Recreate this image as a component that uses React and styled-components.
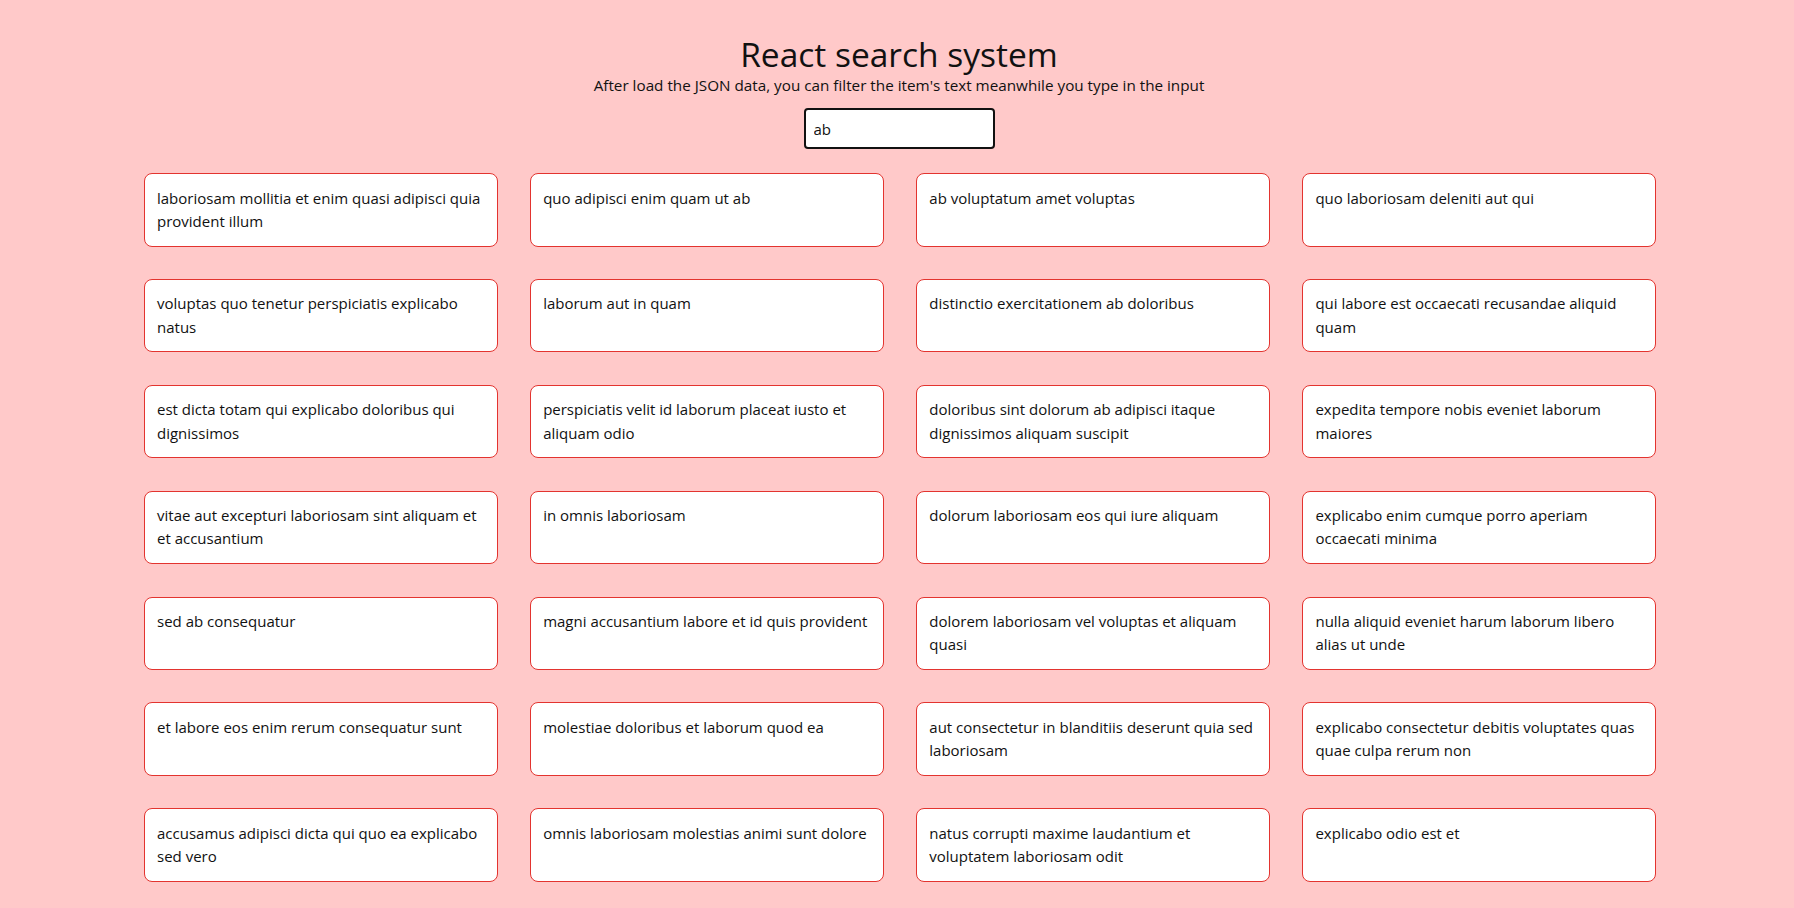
import React, { useState } from "react";
import styled, { createGlobalStyle } from "styled-components";

const GlobalStyle = createGlobalStyle`
  body {
    margin: 0;
    background: #ffc9c9;
    font-family: "Open Sans", "Noto Sans", sans-serif;
    color: #111;
  }
`;

const items = [
  "laboriosam mollitia et enim quasi adipisci quia provident illum",
  "quo adipisci enim quam ut ab",
  "ab voluptatum amet voluptas",
  "quo laboriosam deleniti aut qui",
  "voluptas quo tenetur perspiciatis explicabo natus",
  "laborum aut in quam",
  "distinctio exercitationem ab doloribus",
  "qui labore est occaecati recusandae aliquid quam",
  "est dicta totam qui explicabo doloribus qui dignissimos",
  "perspiciatis velit id laborum placeat iusto et aliquam odio",
  "doloribus sint dolorum ab adipisci itaque dignissimos aliquam suscipit",
  "expedita tempore nobis eveniet laborum maiores",
  "vitae aut excepturi laboriosam sint aliquam et et accusantium",
  "in omnis laboriosam",
  "dolorum laboriosam eos qui iure aliquam",
  "explicabo enim cumque porro aperiam occaecati minima",
  "sed ab consequatur",
  "magni accusantium labore et id quis provident",
  "dolorem laboriosam vel voluptas et aliquam quasi",
  "nulla aliquid eveniet harum laborum libero alias ut unde",
  "et labore eos enim rerum consequatur sunt",
  "molestiae doloribus et laborum quod ea",
  "aut consectetur in blanditiis deserunt quia sed laboriosam",
  "explicabo consectetur debitis voluptates quas quae culpa rerum non",
  "accusamus adipisci dicta qui quo ea explicabo sed vero",
  "omnis laboriosam molestias animi sunt dolore",
  "natus corrupti maxime laudantium et voluptatem laboriosam odit",
  "explicabo odio est et",
];

const Page = styled.div`
  padding: 33px 0 16px;
`;

const Header = styled.header`
  display: flex;
  flex-direction: column;
  align-items: center;
  padding-left: 4px;
`;

const Title = styled.h1`
  margin: 0;
  font-size: 33.5px;
  line-height: 42px;
  font-weight: 400;
`;

const Subtitle = styled.p`
  margin: 0;
  font-size: 15.25px;
  line-height: 20px;
`;

const SearchInput = styled.input`
  box-sizing: border-box;
  margin-top: 13px;
  width: 191px;
  height: 41px;
  padding: 0 8px;
  border: 2px solid #111;
  border-radius: 4px;
  background: #fff;
  font-family: inherit;
  font-size: 15px;
  color: #111;
  outline: none;
`;

const Grid = styled.ul`
  list-style: none;
  margin: 24px 0 0;
  padding: 0 138px 0 144px;
  display: grid;
  grid-template-columns: repeat(4, 1fr);
  gap: 32.4px 32.6px;
`;

const Card = styled.li`
  min-height: 47px;
  padding: 12.5px 12px 12px;
  background: #fff;
  border: 1px solid #e3342f;
  border-radius: 8px;
  font-size: 15px;
  line-height: 23.3px;
`;

const App = () => {
  const [query, setQuery] = useState("ab");

  const filtered = items.filter((text) =>
    text.toLowerCase().includes(query.toLowerCase())
  );

  return (
    <Page>
      <GlobalStyle />
      <Header>
        <Title>React search system</Title>
        <Subtitle>
          After load the JSON data, you can filter the item's text meanwhile you type in the input
        </Subtitle>
        <SearchInput
          type="text"
          value={query}
          onChange={(e) => setQuery(e.target.value)}
        />
      </Header>
      <Grid>
        {filtered.map((text, index) => (
          <Card key={index}>{text}</Card>
        ))}
      </Grid>
    </Page>
  );
};

export default App;
